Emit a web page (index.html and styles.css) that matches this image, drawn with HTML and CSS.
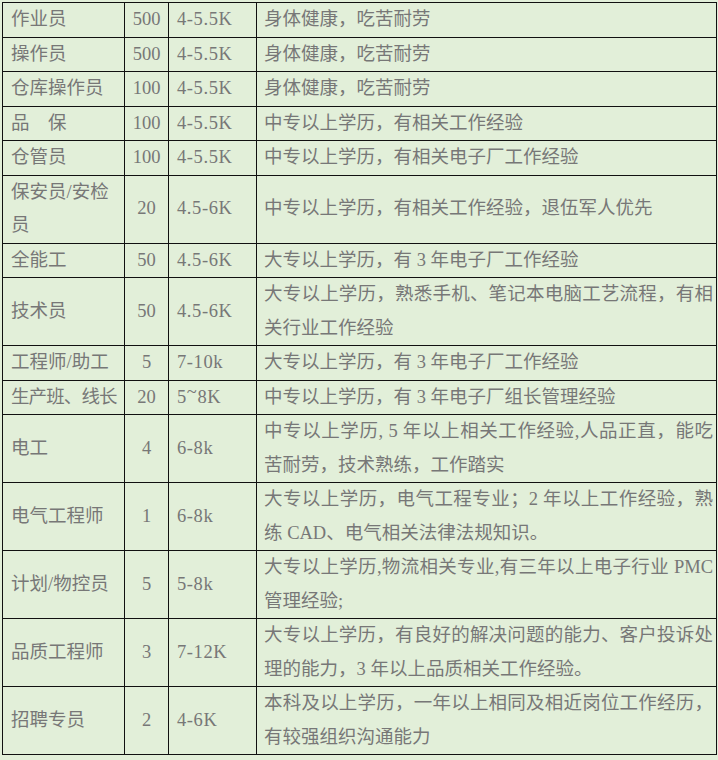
FILE: index.html
```html
<!DOCTYPE html>
<html lang="zh-CN">
<head>
<meta charset="utf-8">
<title>招聘岗位</title>
<link rel="stylesheet" href="styles.css">
</head>
<body>
<table class="jobs">
  <colgroup>
    <col class="c-name"><col class="c-num"><col class="c-pay"><col class="c-req">
  </colgroup>
  <tbody>
    <tr><td class="name">作业员</td><td class="num">500</td><td class="pay">4-5.5K</td><td class="req">身体健康，吃苦耐劳</td></tr>
    <tr><td class="name">操作员</td><td class="num">500</td><td class="pay">4-5.5K</td><td class="req">身体健康，吃苦耐劳</td></tr>
    <tr><td class="name">仓库操作员</td><td class="num">100</td><td class="pay">4-5.5K</td><td class="req">身体健康，吃苦耐劳</td></tr>
    <tr><td class="name">品　保</td><td class="num">100</td><td class="pay">4-5.5K</td><td class="req">中专以上学历，有相关工作经验</td></tr>
    <tr><td class="name">仓管员</td><td class="num">100</td><td class="pay">4-5.5K</td><td class="req">中专以上学历，有相关电子厂工作经验</td></tr>
    <tr><td class="name">保安员/安检员</td><td class="num">20</td><td class="pay">4.5-6K</td><td class="req">中专以上学历，有相关工作经验，退伍军人优先</td></tr>
    <tr><td class="name">全能工</td><td class="num">50</td><td class="pay">4.5-6K</td><td class="req">大专以上学历，有 3 年电子厂工作经验</td></tr>
    <tr><td class="name">技术员</td><td class="num">50</td><td class="pay">4.5-6K</td><td class="req"><span class="ln j">大专以上学历，熟悉手机、笔记本电脑工艺流程，有相</span><span class="ln">关行业工作经验</span></td></tr>
    <tr><td class="name">工程师/助工</td><td class="num">5</td><td class="pay">7-10k</td><td class="req">大专以上学历，有 3 年电子厂工作经验</td></tr>
    <tr><td class="name nowrap">生产班、线长</td><td class="num">20</td><td class="pay">5<span class="tilde">~</span>8K</td><td class="req">中专以上学历，有 3 年电子厂组长管理经验</td></tr>
    <tr><td class="name">电工</td><td class="num">4</td><td class="pay">6-8k</td><td class="req"><span class="ln j">中专以上学历, 5 年以上相关工作经验,人品正直，能吃</span><span class="ln">苦耐劳，技术熟练，工作踏实</span></td></tr>
    <tr><td class="name">电气工程师</td><td class="num">1</td><td class="pay">6-8k</td><td class="req"><span class="ln j">大专以上学历，电气工程专业；2 年以上工作经验，熟</span><span class="ln">练 CAD、电气相关法律法规知识。</span></td></tr>
    <tr><td class="name">计划/物控员</td><td class="num">5</td><td class="pay">5-8k</td><td class="req"><span class="ln j">大专以上学历,物流相关专业,有三年以上电子行业 PMC</span><span class="ln">管理经验;</span></td></tr>
    <tr><td class="name">品质工程师</td><td class="num">3</td><td class="pay">7-12K</td><td class="req"><span class="ln j">大专以上学历，有良好的解决问题的能力、客户投诉处</span><span class="ln">理的能力，3 年以上品质相关工作经验。</span></td></tr>
    <tr><td class="name">招聘专员</td><td class="num">2</td><td class="pay">4-6K</td><td class="req"><span class="ln j">本科及以上学历，一年以上相同及相近岗位工作经历，</span><span class="ln">有较强组织沟通能力</span></td></tr>
  </tbody>
</table>
</body>
</html>
```
FILE: styles.css
```css
html, body {
  margin: 0;
  padding: 0;
  background: #e2efd9;
}

body {
  padding: 2px 0 0 2px;
  font-family: "Liberation Serif", "Noto Sans CJK SC", serif;
  font-size: 18.5px;
  color: #777777;
}

.jobs {
  border-collapse: collapse;
  table-layout: fixed;
  width: 714px;
}

.c-name { width: 122px; }
.c-num { width: 44px; }
.c-pay { width: 88px; }
.c-req { width: 460px; }

.jobs td {
  border: 1px solid #111;
  padding: 0;
  line-height: 33.5px;
  vertical-align: middle;
  text-align: left;
}

.jobs td.name {
  padding: 0 2px 0 8px;
}

.jobs td.nowrap {
  white-space: nowrap;
  letter-spacing: -0.9px;
}

.jobs td.num {
  text-align: center;
}

.jobs td.pay {
  padding-left: 8px;
  letter-spacing: 0.6px;
}

.tilde {
  position: relative;
  top: -5px;
}

.jobs td.req {
  padding: 0 3px 0 7px;
  text-align: justify;
}

.ln {
  display: block;
}

.ln.j {
  text-align: justify;
  text-align-last: justify;
}
```
